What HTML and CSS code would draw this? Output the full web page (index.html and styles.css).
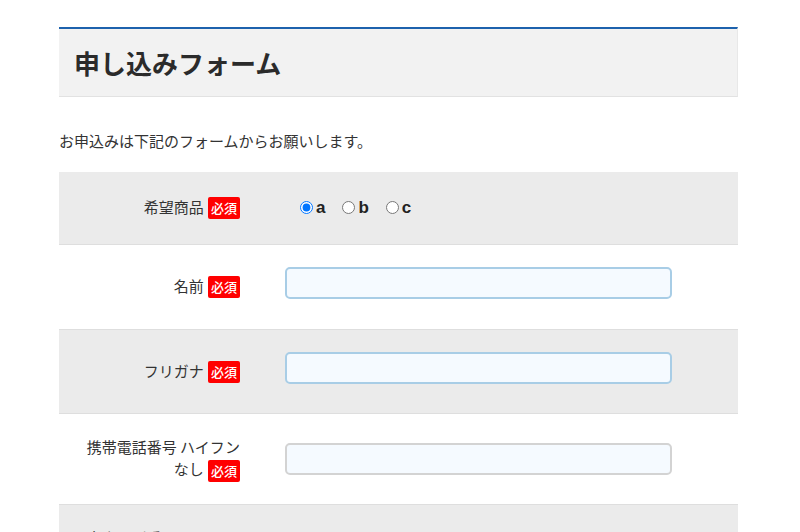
FILE: index.html
```html
<!DOCTYPE html>
<html lang="ja">
<head>
<meta charset="utf-8">
<title>申し込みフォーム</title>
<link rel="stylesheet" href="styles.css">
</head>
<body>
<div class="wrap">
  <header class="page-head">
    <h1 class="page-title">申し込みフォーム</h1>
  </header>
  <p class="intro">お申込みは下記のフォームからお願いします。</p>
  <form class="form">
    <div class="row row--gray row--radio">
      <div class="label">希望商品 <span class="req">必須</span></div>
      <div class="field-cell">
        <div class="radios">
          <label class="radio"><input type="radio" name="item" checked><span>a</span></label>
          <label class="radio"><input type="radio" name="item"><span>b</span></label>
          <label class="radio"><input type="radio" name="item"><span>c</span></label>
        </div>
      </div>
    </div>
    <div class="row">
      <div class="label">名前 <span class="req">必須</span></div>
      <div class="field-cell"><input class="field field--pending" type="text"></div>
    </div>
    <div class="row row--gray row--even">
      <div class="label">フリガナ <span class="req">必須</span></div>
      <div class="field-cell"><input class="field field--pending" type="text"></div>
    </div>
    <div class="row row--even">
      <div class="label">携帯電話番号 ハイフンなし <span class="req">必須</span></div>
      <div class="field-cell"><input class="field" type="text"></div>
    </div>
    <div class="row row--gray row--even">
      <div class="label">自宅電話番号 ハイフンなし</div>
      <div class="field-cell"><input class="field" type="text"></div>
    </div>
  </form>
</div>
</body>
</html>
```

FILE: styles.css
```css
* { box-sizing: border-box; }
html, body { margin: 0; padding: 0; background: #fff; }
body {
  font-family: "Noto Sans CJK JP", "Noto Sans", sans-serif;
  color: #333;
  font-size: 15px;
  line-height: 22px;
}
.wrap {
  width: 679px;
  margin: 27px 0 0 59px;
}
.page-head {
  background: #f2f2f2;
  border-top: 2px solid #1d62ad;
  border-bottom: 1px solid #e2e2e2;
  border-right: 1px solid #e8e8e8;
  padding: 16px 15px 15px;
}
.page-title {
  margin: 0;
  font-size: 26px;
  line-height: 36px;
  font-weight: 700;
  color: #2b2b2b;
}
.intro {
  margin: 33px 0 20px;
}
.form { margin: 0; }
.row {
  display: grid;
  grid-template-columns: 181px 1fr;
  align-items: center;
  padding: 22px 0 23px;
  border-bottom: 1px solid #dedede;
  background: #fff;
}
.row--even { padding: 22px 0; }
.row--gray { background: #ebebeb; }
.label {
  text-align: right;
  padding-left: 20px;
}
.req {
  display: inline-block;
  vertical-align: middle;
  margin-left: 1px;
  width: 32px;
  height: 22px;
  line-height: 22px;
  text-align: center;
  background: #ff0000;
  color: #fff;
  font-size: 13px;
  font-weight: 500;
  border-radius: 2px;
}
.field-cell {
  padding-left: 45px;
}
.field {
  display: block;
  width: 387px;
  height: 32px;
  border: 2px solid #d3d3d3;
  border-radius: 5px;
  background: #f5faff;
  font: inherit;
  padding: 0 8px;
  outline: none;
}
.field--pending {
  border-color: #a8cde6;
  margin-bottom: 7px;
}
.radios {
  display: flex;
  align-items: center;
  padding-left: 15px;
  height: 27px;
}
.radio {
  display: flex;
  align-items: center;
  margin-right: 17px;
  font-family: "Liberation Sans", Arial, sans-serif;
  font-weight: 700;
  font-size: 17px;
  color: #222;
}
.radio input {
  margin: 0 3px 0 0;
  width: 13px;
  height: 13px;
}
```
